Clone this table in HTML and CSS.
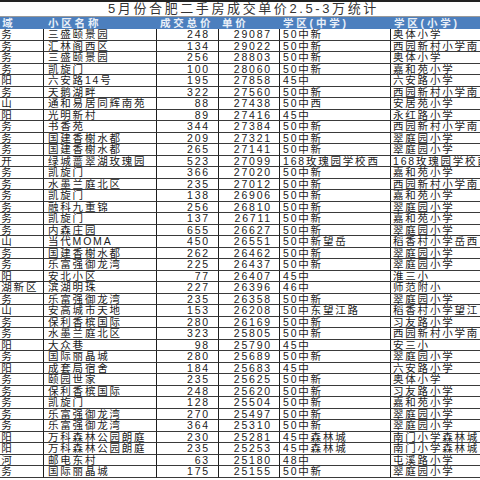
FILE: index.html
```html
<!DOCTYPE html>
<html lang="zh-CN">
<head>
<meta charset="utf-8">
<title>5月份合肥二手房成交单价2.5-3万统计</title>
<link rel="stylesheet" href="styles.css">
</head>
<body>
<div class="sheet">
  <div class="table">
    <div class="title-row">5月份合肥二手房成交单价2.5-3万统计</div>
    <div class="row head">
      <div class="c c1">区域</div><div class="c c2">小区名称</div><div class="c c3">成交总价</div><div class="c c4">单价</div><div class="c c5">学区(中学)</div><div class="c c6">学区(小学)</div>
    </div>
    <div class="row"><div class="c c1">政务</div><div class="c c2">三盛颐景园</div><div class="c c3">248</div><div class="c c4">29087</div><div class="c c5">50中新</div><div class="c c6">奥体小学</div></div>
    <div class="row"><div class="c c1">政务</div><div class="c c2">汇林阁西区</div><div class="c c3">134</div><div class="c c4">29022</div><div class="c c5">50中新</div><div class="c c6">西园新村小学南</div></div>
    <div class="row"><div class="c c1">政务</div><div class="c c2">三盛颐景园</div><div class="c c3">256</div><div class="c c4">28803</div><div class="c c5">50中新</div><div class="c c6">奥体小学</div></div>
    <div class="row"><div class="c c1">政务</div><div class="c c2">凯旋门</div><div class="c c3">100</div><div class="c c4">28060</div><div class="c c5">50中新</div><div class="c c6">嘉和苑小学</div></div>
    <div class="row"><div class="c c1">庐阳</div><div class="c c2">六安路14号</div><div class="c c3">195</div><div class="c c4">27858</div><div class="c c5">45中</div><div class="c c6">六安路小学</div></div>
    <div class="row"><div class="c c1">政务</div><div class="c c2">天鹅湖畔</div><div class="c c3">322</div><div class="c c4">27560</div><div class="c c5">50中新</div><div class="c c6">西园新村小学南</div></div>
    <div class="row"><div class="c c1">蜀山</div><div class="c c2">通和易居同辉南苑</div><div class="c c3">88</div><div class="c c4">27438</div><div class="c c5">50中西</div><div class="c c6">安居苑小学</div></div>
    <div class="row"><div class="c c1">庐阳</div><div class="c c2">光明新村</div><div class="c c3">89</div><div class="c c4">27416</div><div class="c c5">45中</div><div class="c c6">永红路小学</div></div>
    <div class="row"><div class="c c1">政务</div><div class="c c2">书香苑</div><div class="c c3">344</div><div class="c c4">27384</div><div class="c c5">50中新</div><div class="c c6">西园新村小学南</div></div>
    <div class="row"><div class="c c1">政务</div><div class="c c2">国建香榭水都</div><div class="c c3">209</div><div class="c c4">27321</div><div class="c c5">50中新</div><div class="c c6">翠庭园小学</div></div>
    <div class="row"><div class="c c1">政务</div><div class="c c2">国建香榭水都</div><div class="c c3">265</div><div class="c c4">27141</div><div class="c c5">50中新</div><div class="c c6">翠庭园小学</div></div>
    <div class="row"><div class="c c1">经开</div><div class="c c2">绿城蔷翠湖玫瑰园</div><div class="c c3">523</div><div class="c c4">27099</div><div class="c c5">168玫瑰园学校西</div><div class="c c6">168玫瑰园学校西</div></div>
    <div class="row"><div class="c c1">政务</div><div class="c c2">凯旋门</div><div class="c c3">366</div><div class="c c4">27020</div><div class="c c5">50中新</div><div class="c c6">嘉和苑小学</div></div>
    <div class="row"><div class="c c1">政务</div><div class="c c2">水墨兰庭北区</div><div class="c c3">235</div><div class="c c4">27012</div><div class="c c5">50中新</div><div class="c c6">西园新村小学南</div></div>
    <div class="row"><div class="c c1">政务</div><div class="c c2">凯旋门</div><div class="c c3">138</div><div class="c c4">26906</div><div class="c c5">50中新</div><div class="c c6">嘉和苑小学</div></div>
    <div class="row"><div class="c c1">政务</div><div class="c c2">融科九重锦</div><div class="c c3">256</div><div class="c c4">26810</div><div class="c c5">50中新</div><div class="c c6">翠庭园小学</div></div>
    <div class="row"><div class="c c1">政务</div><div class="c c2">凯旋门</div><div class="c c3">137</div><div class="c c4">26711</div><div class="c c5">50中新</div><div class="c c6">嘉和苑小学</div></div>
    <div class="row"><div class="c c1">政务</div><div class="c c2">内森庄园</div><div class="c c3">655</div><div class="c c4">26627</div><div class="c c5">50中新</div><div class="c c6">翠庭园小学</div></div>
    <div class="row"><div class="c c1">蜀山</div><div class="c c2">当代MOMA</div><div class="c c3">450</div><div class="c c4">26551</div><div class="c c5">50中新望岳</div><div class="c c6">稻香村小学岳西</div></div>
    <div class="row"><div class="c c1">政务</div><div class="c c2">国建香榭水都</div><div class="c c3">262</div><div class="c c4">26462</div><div class="c c5">50中新</div><div class="c c6">翠庭园小学</div></div>
    <div class="row"><div class="c c1">政务</div><div class="c c2">乐富强御龙湾</div><div class="c c3">225</div><div class="c c4">26437</div><div class="c c5">50中新</div><div class="c c6">翠庭园小学</div></div>
    <div class="row"><div class="c c1">庐阳</div><div class="c c2">安北小区</div><div class="c c3">77</div><div class="c c4">26407</div><div class="c c5">45中</div><div class="c c6">淮三小</div></div>
    <div class="row"><div class="c c1">滨湖新区</div><div class="c c2">滨湖明珠</div><div class="c c3">227</div><div class="c c4">26396</div><div class="c c5">46中</div><div class="c c6">师范附小</div></div>
    <div class="row"><div class="c c1">政务</div><div class="c c2">乐富强御龙湾</div><div class="c c3">235</div><div class="c c4">26358</div><div class="c c5">50中新</div><div class="c c6">翠庭园小学</div></div>
    <div class="row"><div class="c c1">蜀山</div><div class="c c2">安高城市天地</div><div class="c c3">153</div><div class="c c4">26208</div><div class="c c5">50中东望江路</div><div class="c c6">稻香村小学望江</div></div>
    <div class="row"><div class="c c1">政务</div><div class="c c2">保利香槟国际</div><div class="c c3">280</div><div class="c c4">26169</div><div class="c c5">50中新</div><div class="c c6">习友路小学</div></div>
    <div class="row"><div class="c c1">政务</div><div class="c c2">水墨兰庭北区</div><div class="c c3">323</div><div class="c c4">25805</div><div class="c c5">50中新</div><div class="c c6">西园新村小学南</div></div>
    <div class="row"><div class="c c1">庐阳</div><div class="c c2">大众巷</div><div class="c c3">98</div><div class="c c4">25790</div><div class="c c5">45中</div><div class="c c6">安三小</div></div>
    <div class="row"><div class="c c1">政务</div><div class="c c2">国际丽晶城</div><div class="c c3">280</div><div class="c c4">25689</div><div class="c c5">50中新</div><div class="c c6">翠庭园小学</div></div>
    <div class="row"><div class="c c1">庐阳</div><div class="c c2">成套局宿舍</div><div class="c c3">184</div><div class="c c4">25683</div><div class="c c5">45中</div><div class="c c6">六安路小学</div></div>
    <div class="row"><div class="c c1">政务</div><div class="c c2">颐园世家</div><div class="c c3">235</div><div class="c c4">25625</div><div class="c c5">50中新</div><div class="c c6">奥体小学</div></div>
    <div class="row"><div class="c c1">政务</div><div class="c c2">保利香槟国际</div><div class="c c3">248</div><div class="c c4">25620</div><div class="c c5">50中新</div><div class="c c6">习友路小学</div></div>
    <div class="row"><div class="c c1">政务</div><div class="c c2">凯旋门</div><div class="c c3">128</div><div class="c c4">25504</div><div class="c c5">50中新</div><div class="c c6">嘉和苑小学</div></div>
    <div class="row"><div class="c c1">政务</div><div class="c c2">乐富强御龙湾</div><div class="c c3">270</div><div class="c c4">25497</div><div class="c c5">50中新</div><div class="c c6">翠庭园小学</div></div>
    <div class="row"><div class="c c1">政务</div><div class="c c2">乐富强御龙湾</div><div class="c c3">364</div><div class="c c4">25310</div><div class="c c5">50中新</div><div class="c c6">翠庭园小学</div></div>
    <div class="row"><div class="c c1">庐阳</div><div class="c c2">万科森林公园朗庭</div><div class="c c3">230</div><div class="c c4">25281</div><div class="c c5">45中森林城</div><div class="c c6">南门小学森林城</div></div>
    <div class="row"><div class="c c1">庐阳</div><div class="c c2">万科森林公园朗庭</div><div class="c c3">235</div><div class="c c4">25253</div><div class="c c5">45中森林城</div><div class="c c6">南门小学森林城</div></div>
    <div class="row"><div class="c c1">包河</div><div class="c c2">邮电东村</div><div class="c c3">63</div><div class="c c4">25180</div><div class="c c5">48中</div><div class="c c6">屯溪路小学</div></div>
    <div class="row"><div class="c c1">政务</div><div class="c c2">国际丽晶城</div><div class="c c3">175</div><div class="c c4">25155</div><div class="c c5">50中新</div><div class="c c6">翠庭园小学</div></div>
  </div>
</div>
</body>
</html>
```

FILE: styles.css
```css
html, body {
  margin: 0;
  padding: 0;
  background: #ffffff;
}

.sheet {
  width: 480px;
  height: 480px;
  overflow: hidden;
  box-sizing: border-box;
  border-top: 2px solid #222222;
  background: #ffffff;
}

.table {
  width: 524px;
  margin-left: -13px;
  font-family: "Liberation Sans", "Noto Sans CJK SC", sans-serif;
  color: #1a1a1a;
}

.title-row {
  height: 15px;
  box-sizing: border-box;
  padding-left: 121px;
  font-size: 13px;
  line-height: 14px;
  letter-spacing: 2.6px;
  color: #333333;
  border-bottom: 1px solid #9a9a9a;
  white-space: nowrap;
}

.row {
  display: grid;
  grid-template-columns: 57px 113px 62px 61px 111px 120px;
  height: 11.5px;
}

.c {
  box-sizing: border-box;
  border-right: 1px solid #1e1e1e;
  border-bottom: 1px solid #3a3a3a;
  overflow: hidden;
  white-space: nowrap;
  font-size: 10.5px;
  line-height: 10.5px;
  letter-spacing: 1.8px;
  padding-left: 3px;
}

.c1 { padding-left: 2px; }
.c2 { padding-left: 4px; }
.c3 { text-align: right; padding-left: 0; padding-right: 8px; }
.c4 { text-align: right; padding-left: 0; padding-right: 7px; }
.c6 { padding-left: 2px; }

.row.head {
  height: 12px;
  background: #4c7fbe;
}

.head .c {
  border: none;
  color: #e9eff8;
  font-weight: bold;
  letter-spacing: 2.8px;
  line-height: 12px;
  text-align: left;
  padding-left: 3px;
  padding-right: 0;
}

.head .c1 { padding-left: 2px; }
.head .c2 { padding-left: 4px; }
```
